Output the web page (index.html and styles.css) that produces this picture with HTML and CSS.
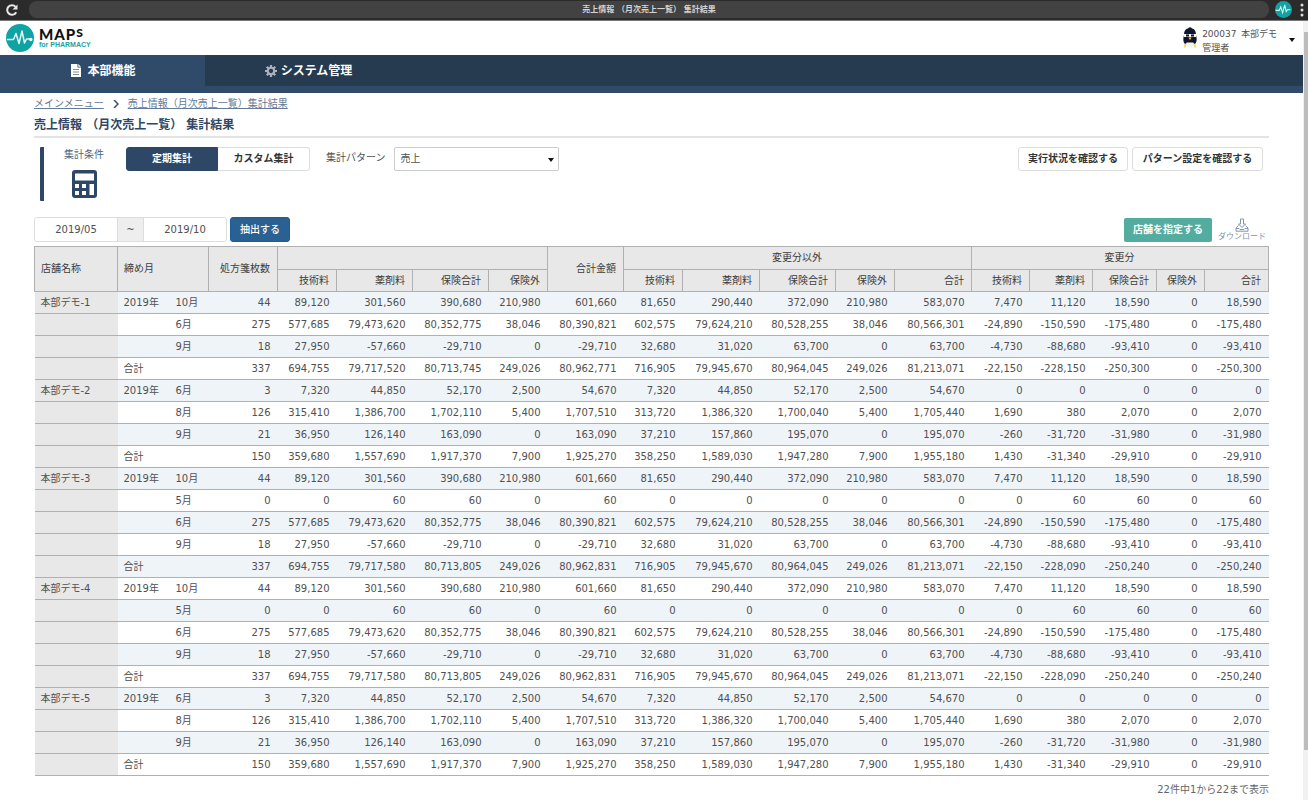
FILE: index.html
```html
<!DOCTYPE html>
<html lang="ja">
<head>
<meta charset="utf-8">
<title>売上情報 （月次売上一覧） 集計結果</title>
<link rel="stylesheet" href="styles.css">
</head>
<body>
<div class="window-bar">
  <button class="reload" type="button" aria-label="再読み込み">
    <svg viewBox="0 0 14 14" width="14" height="14" fill="none" stroke="#e8e8e8" stroke-width="2"><path d="M11.2 9.2A4.8 4.8 0 1 1 10.6 3.8"/><path d="M12.5 1.5v5h-5z" fill="#e8e8e8" stroke="none"/></svg>
  </button>
  <div class="address">売上情報 （月次売上一覧） 集計結果</div>
  <svg class="badge" viewBox="0 0 28 28" width="17" height="17"><circle cx="14" cy="14" r="14" fill="#0fa3a3"/><path d="M1 15.500h6l2.500-6 3 10 3.500-13 2.500 11 2-3h5" fill="none" stroke="#d9f3f1" stroke-width="1.800"/></svg>
  <svg class="dots" viewBox="0 0 4 14" width="4" height="14" fill="#ddd"><circle cx="2" cy="2" r="1.500"/><circle cx="2" cy="7" r="1.500"/><circle cx="2" cy="12" r="1.500"/></svg>
</div>
<div class="viewport">
  <div class="page">
    <header class="header">
      <a class="logo" href="#">
        <svg viewBox="0 0 28 28" width="28" height="28"><circle cx="14" cy="14" r="14" fill="#0fa3a3"/><path d="M1 15.500h6.500l2.500-6 3 10 3-12.500 2.500 12 2-4h4" fill="none" stroke="#e6f7f6" stroke-width="1.500" stroke-linejoin="round"/><circle cx="24.800" cy="15.500" r="1.700" fill="#fff"/></svg>
        <span class="logo-text"><span class="logo-name">MAP<sup>S</sup></span><span class="logo-sub">for PHARMACY</span></span>
      </a>
      <button class="account" type="button">
        <svg viewBox="0 0 14 22" width="14" height="22"><path d="M3 16l-1.500 4.500M11 16l1.500 4.500" stroke="#f0dc6a" stroke-width="2"/><path d="M4 14h6v6.500H4z" fill="#f4f4f0"/><path d="M5 1.500Q7-1 9 1.500C12 2 13 5 13 8c1 4 1 7-1 9l-2-1.500H4L2 17C0 15 0 12 1 8c0-3 1-6 4-6.500z" fill="#11142c"/><path d="M1 7h12v3H1z" fill="#f5f5f5"/><path d="M3 7.500h3v2H3zM8 7.500h3v2H8z" fill="#11142c"/><path d="M5.500 10.500h3L7 13z" fill="#f2cf3c"/></svg>
        <span class="account-name">200037&ensp;本部デモ<br>管理者</span>
        <svg class="caret" viewBox="0 0 6 4" width="6" height="4"><path d="M0 0h6L3 4z" fill="#111"/></svg>
      </button>
    </header>
    <nav class="nav">
      <a class="tab active" href="#">
        <svg viewBox="0 0 10 13" width="10" height="13"><path d="M0 0h6.500v3.500H10V13H0z" fill="#fff"/><path d="M7.300 0L10 2.700H7.300z" fill="#fff"/><path d="M2 5.500h6M2 8h6M2 10.500h6" stroke="#7f90a5"/></svg>本部機能</a>
      <a class="tab" href="#">
        <svg viewBox="0 0 14 14" width="12" height="12" fill="none" stroke="#aab3bd"><circle cx="7" cy="7" r="3.800" stroke-width="2.600"/><path d="M7 0v3M7 11v3M0 7h3M11 7h3M2.050 2.050l2.100 2.100M9.850 9.850l2.100 2.100M2.050 11.950l2.100-2.100M9.850 4.150l2.100-2.100" stroke-width="2.600"/></svg>システム管理</a>
    </nav>
    <main class="main">
      <div class="breadcrumb">
        <a href="#">メインメニュー</a>
        <svg viewBox="0 0 6 8" width="6" height="8" fill="none" stroke="#3c5068" stroke-width="1.500"><path d="M1 0l4 4-4 4"/></svg>
        <a href="#">売上情報（月次売上一覧）集計結果</a>
      </div>
      <h1 class="title">売上情報 （月次売上一覧） 集計結果</h1>
      <section class="conditions">
        <div class="condition-label">
          <span>集計条件</span>
          <svg viewBox="0 0 25 28" width="25" height="28"><rect width="25" height="28" rx="3" fill="#2f4767"/><path d="M3 3.500h19v7H3zM3 14h4v4H3zM10 14h4v4h-4zM3 21h4v4H3zM10 21h4v4h-4zM17.500 14H22v11h-4.500z" fill="#fff"/></svg>
        </div>
        <div class="segmented">
          <button class="segment selected" type="button">定期集計</button>
          <button class="segment" type="button">カスタム集計</button>
        </div>
        <label class="pattern-label" for="pattern">集計パターン</label>
        <div class="select-wrap">
          <select id="pattern"><option>売上</option></select>
          <svg class="caret select-caret" viewBox="0 0 6 4" width="6" height="4"><path d="M0 0h6L3 4z" fill="#111"/></svg>
        </div>
        <div class="condition-actions">
          <button class="plain" type="button">実行状況を確認する</button>
          <button class="plain" type="button">パターン設定を確認する</button>
        </div>
      </section>
      <section class="filters">
        <div class="range">
          <input type="text" aria-label="開始月" value="2019/05">
          <span class="tilde">~</span>
          <input type="text" aria-label="終了月" value="2019/10">
        </div>
        <button class="extract" type="button">抽出する</button>
        <button class="store" type="button">店舗を指定する</button>
        <a class="download" href="#">
          <svg viewBox="0 0 14 14" width="14" height="14" fill="none" stroke="#8595ab"><path d="M5.500 1h3v5h2L7 9.500 3.500 6h2z"/><path d="M3.500 7.500L1 10v3.200h12V10l-2.500-2.500M1 10.500h3l1 1h4l1-1h3"/></svg>
          ダウンロード</a>
      </section>
      <table class="sales">
        <colgroup>
          <col class="w83"><col class="w52"><col class="w39"><col class="w69"><col class="w59"><col class="w76"><col class="w76"><col class="w59"><col class="w76"><col class="w59"><col class="w77"><col class="w76"><col class="w59"><col class="w77"><col class="w58"><col class="w63"><col class="w64"><col class="w48"><col class="w64">
        </colgroup>
        <thead>
          <tr>
            <th class="left" rowspan="2">店舗名称</th><th class="left" rowspan="2" colspan="2">締め月</th><th rowspan="2">処方箋枚数</th>
            <th colspan="4"></th><th rowspan="2">合計金額</th><th class="center" colspan="5">変更分以外</th><th class="center" colspan="5">変更分</th>
          </tr>
          <tr>
            <th>技術料</th><th>薬剤料</th><th>保険合計</th><th>保険外</th>
            <th>技術料</th><th>薬剤料</th><th>保険合計</th><th>保険外</th><th>合計</th>
            <th>技術料</th><th>薬剤料</th><th>保険合計</th><th>保険外</th><th>合計</th>
          </tr>
        </thead>
        <tbody id="sales-body"></tbody>
      </table>
      <p class="count">22件中1から22まで表示</p>
    </main>
  </div>
  <div class="scrollbar" aria-hidden="true"><div class="thumb"></div></div>
</div>
<script src="sales.js"></script>
</body>
</html>
```
FILE: styles.css
```css
* { box-sizing: border-box; }

body {
  margin: 0;
  min-height: 100vh;
  display: flex;
  flex-direction: column;
  background: #fff;
  color: #505050;
  font: 10px/14px "DejaVu Sans", "Noto Sans CJK JP", sans-serif;
}

button, input, select { font: inherit; color: inherit; margin: 0; }
button { cursor: pointer; padding: 0; }
svg { flex: none; display: block; }

.window-bar {
  display: flex;
  align-items: center;
  gap: 8px;
  height: 21px;
  padding: 0 4px 1px 5px;
  background: #2b2b2b;
  border-bottom: 1px solid #777;
}
.reload { border: 0; background: none; width: 16px; }
.badge { margin-left: -2px; }
.address {
  flex: 1;
  height: 17px;
  border-radius: 8px;
  background: #424242;
  color: #d4d4d4;
  font-size: 8px;
  font-weight: bold;
  line-height: 18px;
  text-align: center;
}

.viewport { flex: 1; display: flex; }
.page { flex: 1; min-width: 0; }
.scrollbar {
  width: 5px;
  padding: 11px 0 50px 1px;
  background: #f1f1f1;
  display: flex;
}
.thumb { flex: 1; background: #bcbcbc; }

.header {
  display: flex;
  justify-content: space-between;
  align-items: center;
  height: 34px;
  padding: 0 8px 0 6px;
}
.logo { display: flex; align-items: center; gap: 5px; text-decoration: none; }
.logo-text { display: flex; flex-direction: column; font-family: Lato, sans-serif; }
.logo-name { color: #111; font-size: 15px; line-height: 14px; font-weight: 900; letter-spacing: 1px; }
.logo-name sup { font-size: 12px; line-height: 0; vertical-align: 3px; }
.logo-sub { color: #16a5a3; font: bold 7px/8px "Liberation Sans", sans-serif; }
.account {
  display: flex;
  align-items: center;
  gap: 5px;
  border: 0;
  background: none;
  text-align: left;
  font-size: 9px;
}
.account-name { padding-top: 6px; }
.account .caret { margin: 4px 0 0 7px; }

.nav { display: flex; background: #263b50; border-bottom: 7px solid #304a69; }
.tab {
  display: flex;
  align-items: center;
  justify-content: center;
  gap: 6px;
  width: 205px;
  height: 31px;
  padding-left: 2px;
  color: #fff;
  font-size: 12px;
  font-weight: bold;
  text-decoration: none;
}
.tab.active { background: #304a69; }
.tab + .tab { gap: 4px; }

.main { padding: 3px 34px 0; }
.breadcrumb { display: flex; align-items: center; gap: 9px; height: 16px; }
.breadcrumb a { color: #647a96; text-decoration: underline; text-underline-offset: 1px; }
.title {
  margin: 0 0 9px;
  padding: 5px 0 3px;
  border-bottom: 2px solid #e3e3e3;
  color: #2f4767;
  font-size: 12px;
  line-height: 16px;
}

.conditions { display: flex; align-items: flex-start; margin-left: 6px; height: 54px; }
.condition-label {
  display: flex;
  flex-direction: column;
  align-items: center;
  gap: 7px;
  width: 84px;
  height: 54px;
  margin-right: 2px;
  border-left: 4px solid #2f4767;
  border-radius: 1px;
  color: #4d6583;
}
.condition-label span { line-height: 16px; }
.segmented { display: flex; }
.segment, .plain {
  height: 24px;
  border: 1px solid #ddd;
  border-radius: 3px;
  background: #fff;
  color: #333;
}
.segment { width: 92px; font-weight: bold; }
.segment:first-child { border-radius: 3px 0 0 3px; }
.segment:last-child { border-radius: 0 3px 3px 0; border-left: 0; }
.segment.selected { background: #2f4767; border-color: #2f4767; color: #fff; }
.pattern-label { margin: 0 8px 0 16px; line-height: 22px; }
.select-wrap { position: relative; width: 165px; }
.select-wrap select {
  appearance: none;
  display: block;
  width: 100%;
  height: 24px;
  padding: 0 6px;
  border: 1px solid #ccc;
  border-radius: 2px;
  background: #fff;
}
.select-caret { position: absolute; right: 5px; top: 11px; pointer-events: none; }
.condition-actions { display: flex; gap: 4px; margin: 0 6px 0 auto; }
.plain { padding: 0 8px; min-width: 110px; font-weight: bold; }
.plain + .plain { min-width: 131px; }

.filters { display: flex; align-items: flex-end; margin-top: 16px; height: 25px; }
.range { display: flex; height: 25px; border: 1px solid #ddd; border-radius: 3px; margin-right: 3px; }
.range input { width: 82px; border: 0; padding: 0; text-align: center; background: #fff; border-radius: 3px; }
.tilde { width: 27px; text-align: center; line-height: 23px; background: #eee; border: solid #ddd; border-width: 0 1px; }
.extract { width: 60px; height: 25px; border: 1px solid #1d5aa0; border-radius: 3px; background: #2a6193; color: #fff; font-weight: 500; }
.store { width: 88px; height: 24px; margin: 0 3px 0 auto; border: 0; border-radius: 2px; background: #52ada0; color: #fff; font-weight: bold; }
.download {
  display: flex;
  flex-direction: column;
  align-items: center;
  width: 54px;
  color: #8595ab;
  font-size: 8px;
  line-height: 10px;
  text-decoration: none;
}

.sales {
  width: 100%;
  margin-top: 4px;
  table-layout: fixed;
  border-collapse: collapse;
}
.w83 { width: 83px; } .w52 { width: 52px; } .w39 { width: 39px; }
.w69 { width: 69px; } .w59 { width: 59px; } .w58 { width: 58px; }
.w77 { width: 77px; } .w76 { width: 76px; } .w64 { width: 64px; }
.w63 { width: 63px; } .w48 { width: 48px; }
.sales th, .sales td {
  height: 22px;
  padding: 0 7px 0 6px;
  text-align: right;
  white-space: nowrap;
  line-height: 14px;
  font-weight: normal;
}
.sales thead th { border: 1px solid #b0b0b0; background: #e8e8e8; color: #3c3c3c; }
.sales thead tr:first-child { height: 23px; }
.sales td, .sales tbody th { border-bottom: 1px solid #b0b0b0; }
.sales tbody tr:nth-child(odd) { background: #eff4f8; }
.sales tbody th { background: #e8e8e8; }
.sales .left, .sales tbody th { text-align: left; }
.sales .center { text-align: center; }
.count { margin: 7px 0 0; text-align: right; color: #666; }
```
FILE: sales.js
```js
const october = ["10月", "44 89,120 301,560 390,680 210,980 601,660 81,650 290,440 372,090 210,980 583,070 7,470 11,120 18,590 0 18,590"];
const may = ["5月", "0 0 60 60 0 60 0 0 0 0 0 0 60 60 0 60"];
const june = ["6月", "275 577,685 79,473,620 80,352,775 38,046 80,390,821 602,575 79,624,210 80,528,255 38,046 80,566,301 -24,890 -150,590 -175,480 0 -175,480"];
const september = ["9月", "18 27,950 -57,660 -29,710 0 -29,710 32,680 31,020 63,700 0 63,700 -4,730 -88,680 -93,410 0 -93,410"];
const totalWithMay = ["合計", "337 694,755 79,717,580 80,713,805 249,026 80,962,831 716,905 79,945,670 80,964,045 249,026 81,213,071 -22,150 -228,090 -250,240 0 -250,240"];
const smallStore = [
  ["6月", "3 7,320 44,850 52,170 2,500 54,670 7,320 44,850 52,170 2,500 54,670 0 0 0 0 0"],
  ["8月", "126 315,410 1,386,700 1,702,110 5,400 1,707,510 313,720 1,386,320 1,700,040 5,400 1,705,440 1,690 380 2,070 0 2,070"],
  ["9月", "21 36,950 126,140 163,090 0 163,090 37,210 157,860 195,070 0 195,070 -260 -31,720 -31,980 0 -31,980"],
  ["合計", "150 359,680 1,557,690 1,917,370 7,900 1,925,270 358,250 1,589,030 1,947,280 7,900 1,955,180 1,430 -31,340 -29,910 0 -29,910"]
];
const stores = [
  [october, june, september, ["合計", "337 694,755 79,717,520 80,713,745 249,026 80,962,771 716,905 79,945,670 80,964,045 249,026 81,213,071 -22,150 -228,150 -250,300 0 -250,300"]],
  smallStore,
  [october, may, june, september, totalWithMay],
  [october, may, june, september, totalWithMay],
  smallStore
];

const body = document.getElementById("sales-body");
stores.forEach((rows, store) => rows.forEach(([period, values], index) => {
  const row = body.insertRow();
  const name = document.createElement("th");
  name.scope = "row";
  name.textContent = index === 0 ? `本部デモ-${store + 1}` : "";
  row.append(name);
  const add = (text, className) => {
    const cell = row.insertCell();
    cell.textContent = text;
    if (className) cell.className = className;
  };
  const isTotal = period === "合計";
  add(isTotal ? period : index === 0 ? "2019年" : "", "left");
  add(isTotal ? "" : period, "left");
  values.split(" ").forEach(value => add(value));
}));
```
